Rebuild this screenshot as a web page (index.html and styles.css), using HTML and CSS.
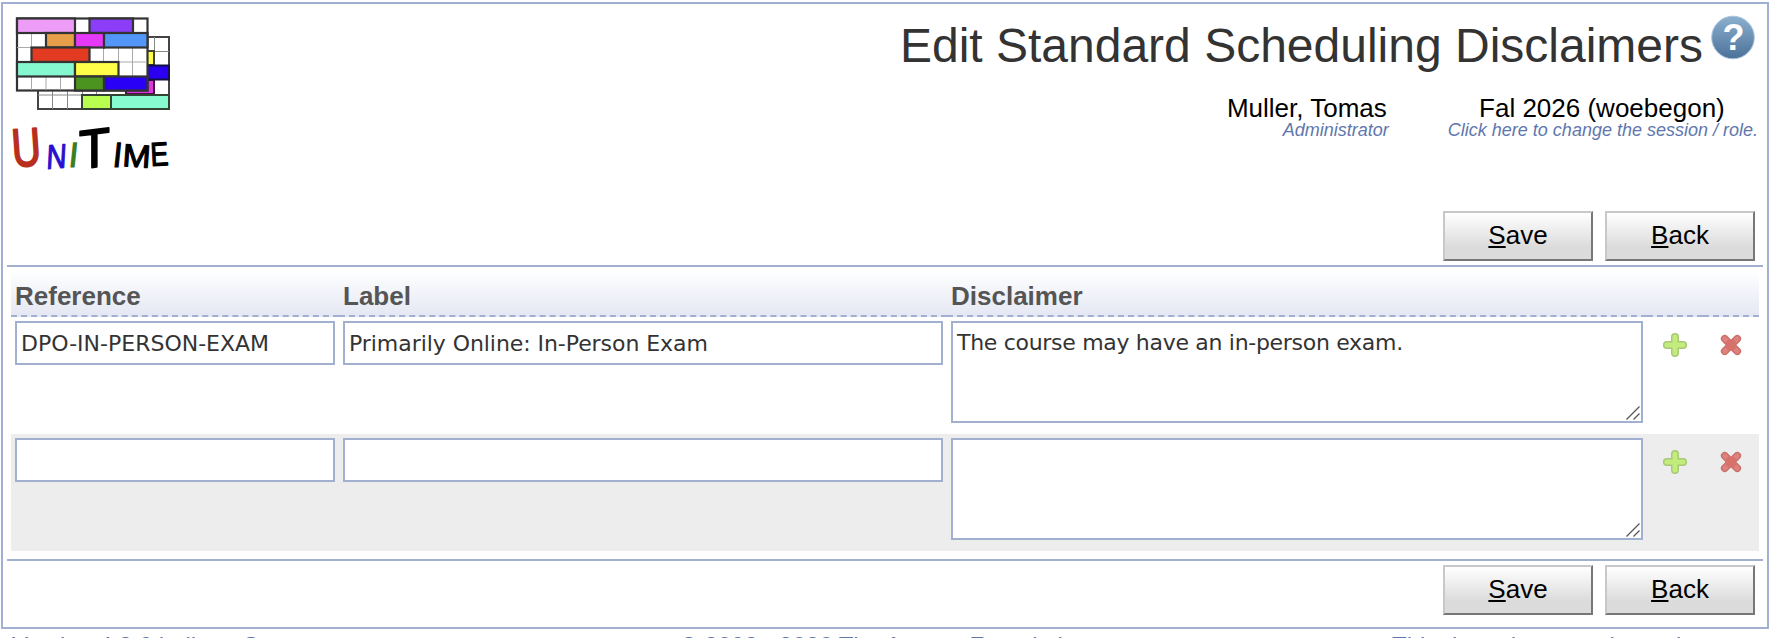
FILE: index.html
```
<!DOCTYPE html>
<html lang="en">
<head>
  <meta charset="UTF-8">
  <title>Edit Standard Scheduling Disclaimers</title>
  <link rel="stylesheet" href="styles.css">
</head>
<body>
  <svg class="defs" width="0" height="0">
    <defs>
      <linearGradient id="blue" x1="0" y1="0" x2="0" y2="1">
        <stop offset="0" stop-color="#8bb0cf"/>
        <stop offset="1" stop-color="#4c7199"/>
      </linearGradient>
      <symbol id="add" viewBox="0 0 26 26">
        <path d="M13 4.900V21.100M4.900 13H21.100" stroke="#a9c878" stroke-width="8" stroke-linecap="round"/>
        <path d="M13 4.900V21.100M4.900 13H21.100" stroke="#c2ec7c" stroke-width="5" stroke-linecap="round"/>
      </symbol>
      <symbol id="delete" viewBox="0 0 26 26">
        <path d="M6.700 6.700L19.300 19.300M19.300 6.700L6.700 19.300" stroke="#c8706b" stroke-width="7.600" stroke-linecap="round"/>
        <path d="M6.700 6.700L19.300 19.300M19.300 6.700L6.700 19.300" stroke="#df827d" stroke-width="4.800" stroke-linecap="round"/>
        <path d="M9 9L17 17M17 9L9 17" stroke="#d8716b" stroke-width="4.800"/>
      </symbol>
    </defs>
  </svg>

  <div class="page">
    <div class="header">
      <svg class="logo" width="160" height="162" viewBox="12 14 160 162">
        <!-- back timetable -->
        <rect x="38" y="37" width="131" height="72" fill="#fff" stroke="#444" stroke-width="2"/>
        <path d="M52.500 91V109M67.500 91V109M82.500 91V109M96.500 91V109M154.500 37V95M38 95H169M148 51.500H169" stroke="#888" fill="none"/>
        <rect x="140" y="51" width="14" height="14" fill="#ffff45" stroke="#443" stroke-width="2"/>
        <rect x="126" y="80" width="28" height="14" fill="#dd35df" stroke="#414" stroke-width="2"/>
        <rect x="140" y="65.500" width="29" height="14" fill="#2b00f0" stroke="#114" stroke-width="2"/>
        <rect x="82" y="95" width="29" height="14" fill="#b8ff50" stroke="#343" stroke-width="2"/>
        <rect x="111" y="95" width="58" height="14" fill="#87fad0" stroke="#343" stroke-width="2"/>
        <!-- front timetable -->
        <rect x="17" y="18.500" width="130.500" height="72" fill="#fff" stroke="#333" stroke-width="2.200"/>
        <path d="M31.500 33V90M46 33V90M60.500 76V90M103.500 48V62M118.500 48V76M132.500 48V76M17 47.500H46M90 62H147" stroke="#aaa" fill="none"/>
        <g stroke="#333" stroke-width="2.200">
          <rect x="17" y="18.500" width="58" height="14.500" fill="#ed9cf7"/>
          <rect x="89.500" y="18.500" width="43.500" height="14.500" fill="#8b3df7"/>
          <rect x="46" y="33" width="29" height="14.500" fill="#e89f49"/>
          <rect x="75" y="33" width="29" height="14.500" fill="#e638f7"/>
          <rect x="104" y="33" width="43.500" height="14.500" fill="#5297f8"/>
          <rect x="31.500" y="47.500" width="58" height="14.500" fill="#e23b22"/>
          <rect x="17" y="62" width="58" height="14.500" fill="#85f8cf"/>
          <rect x="75" y="62" width="43.500" height="14.500" fill="#ffff49"/>
          <rect x="75" y="76.500" width="29" height="14" fill="#4b941f"/>
          <rect x="104" y="76.500" width="43.500" height="14" fill="#2900f5"/>
          <path d="M17 33H147.500" fill="none"/>
        </g>
        <g class="wordmark">
          <text transform="translate(13 167) rotate(-4)" font-size="54" textLength="29" lengthAdjust="spacingAndGlyphs" fill="#b92f1d" stroke="#b92f1d" stroke-width="2">U</text>
          <text transform="translate(46 169) rotate(-4) skewX(-7)" font-size="34" textLength="20" lengthAdjust="spacingAndGlyphs" fill="#2b0fd0" stroke="#2b0fd0">N</text>
          <text transform="translate(68 167) skewX(-6)" font-size="35" textLength="9" lengthAdjust="spacingAndGlyphs" fill="#3b7d20" stroke="#3b7d20">I</text>
          <text transform="translate(79 169) rotate(-7) skewX(-7)" font-size="54" textLength="31" lengthAdjust="spacingAndGlyphs" stroke="#000" stroke-width="2">T</text>
          <text transform="translate(112 167) skewX(-6)" font-size="35" textLength="9" lengthAdjust="spacingAndGlyphs" stroke="#000">I</text>
          <text transform="translate(122 166) rotate(4)" font-size="32" textLength="28" lengthAdjust="spacingAndGlyphs" stroke="#000">M</text>
          <text transform="translate(151 166) rotate(-3)" font-size="33" textLength="18" lengthAdjust="spacingAndGlyphs" stroke="#000">E</text>
        </g>
      </svg>
      <div class="header-right">
        <div class="title">
          <h1>Edit Standard Scheduling Disclaimers</h1>
          <svg class="help" width="46" height="46" viewBox="0 0 46 46">
            <circle cx="23" cy="23.500" r="21.300" fill="url(#blue)" stroke="#a9c4dc" stroke-width="1"/>
            <text x="23.500" y="35.500" text-anchor="middle">?</text>
          </svg>
        </div>
        <div class="info">
          <div class="user">
            <div class="name">Muller, Tomas</div>
            <a class="hint">Administrator</a>
          </div>
          <div class="session">
            <div class="name">Fal 2026 (woebegon)</div>
            <a class="hint">Click here to change the session / role.</a>
          </div>
        </div>
      </div>
    </div>

    <div class="buttons top">
      <button class="btn"><u>S</u>ave</button>
      <button class="btn"><u>B</u>ack</button>
    </div>

    <div class="table">
      <div class="row head">
        <div class="cell">Reference</div>
        <div class="cell">Label</div>
        <div class="cell">Disclaimer</div>
        <div class="cell"></div>
        <div class="cell"></div>
      </div>
      <div class="row">
        <div class="cell"><input class="field" type="text" value="DPO-IN-PERSON-EXAM"></div>
        <div class="cell"><input class="field label" type="text" value="Primarily Online: In-Person Exam"></div>
        <div class="cell area">
          <textarea class="field">The course may have an in-person exam.</textarea>
          <svg class="grip" width="16" height="16" viewBox="0 0 16 16"><path d="M1.500 14.500L14.500 1.500M8.500 14.500L14.500 8.500"/></svg>
        </div>
        <div class="cell icon"><svg width="26" height="26"><use href="#add"/></svg></div>
        <div class="cell icon"><svg width="26" height="26"><use href="#delete"/></svg></div>
      </div>
      <div class="row odd">
        <div class="cell"><input class="field" type="text"></div>
        <div class="cell"><input class="field label" type="text"></div>
        <div class="cell area">
          <textarea class="field"></textarea>
          <svg class="grip" width="16" height="16" viewBox="0 0 16 16"><path d="M1.500 14.500L14.500 1.500M8.500 14.500L14.500 8.500"/></svg>
        </div>
        <div class="cell icon"><svg width="26" height="26"><use href="#add"/></svg></div>
        <div class="cell icon"><svg width="26" height="26"><use href="#delete"/></svg></div>
      </div>
    </div>

    <div class="buttons bottom">
      <button class="btn"><u>S</u>ave</button>
      <button class="btn"><u>B</u>ack</button>
    </div>
  </div>

  <div class="footer">
    <span>Version 4.8.6 built on Sat</span>
    <span>© 2008 - 2026 The Apereo Foundation</span>
    <span>This demo is not registered.</span>
  </div>
</body>
</html>
```
FILE: styles.css
```
* {
  box-sizing: border-box;
}
html, body {
  height: 100%;
  overflow: hidden;
}
body {
  margin: 0;
  padding: 2px 9px 0 1px;
  background: #fff;
  color: #000;
  font-family: "Liberation Sans", Arial, sans-serif;
  font-size: 26px;
}
.defs {
  display: block;
}
.page {
  height: 627px;
  border: 2px solid #a1afd0;
  padding: 0 4px;
}
.header {
  display: flex;
  height: 207px;
  padding: 10px 5px 0 5px;
}
.logo {
  flex: none;
  overflow: visible;
}
.wordmark {
  font-family: "Liberation Sans", Arial, sans-serif;
  stroke-width: 1.2;
  stroke-linejoin: round;
}
.header-right {
  flex: 1;
  display: flex;
  flex-direction: column;
  align-items: flex-end;
}
.title {
  display: flex;
  height: 80px;
  margin-right: 2px;
}
h1 {
  margin: 4px 7px 0 0;
  font-size: 48px;
  font-weight: normal;
  line-height: 56px;
  color: #333;
  white-space: nowrap;
}
.help text {
  font: bold 36px "Liberation Sans", Arial, sans-serif;
  fill: #fff;
}
.info {
  display: flex;
  gap: 59px;
  white-space: nowrap;
}
.user {
  text-align: right;
}
.session {
  text-align: center;
}
.name {
  margin-right: 2px;
  line-height: 28px;
  font-size: 26px;
}
.hint {
  display: block;
  margin-top: -1px;
  font-size: 18px;
  font-style: italic;
  line-height: 18px;
  color: #6077ad;
}
.buttons {
  display: flex;
  justify-content: flex-end;
  gap: 12px;
  padding-right: 8px;
}
.top {
  height: 56px;
  border-bottom: 2px solid #a1afd0;
}
.bottom {
  margin-top: 8px;
  padding-top: 4px;
  border-top: 2px solid #a1afd0;
}
.btn {
  width: 150px;
  height: 50px;
  padding: 0 0 1px;
  border: 2px solid;
  border-color: #c8c8c8 #777 #777 #c8c8c8;
  background: linear-gradient(#fff, #dbdbdb 75%, #dcdcdc);
  font: 26px "Liberation Sans", Arial, sans-serif;
  color: #000;
}
.btn u {
  text-decoration-thickness: 2px;
  text-underline-offset: 2px;
}
.table {
  margin: 4px 4px 0;
}
.row {
  display: grid;
  grid-template-columns: 328px 608px 700px 56px 56px;
  height: 117px;
}
.odd {
  background: #ededed;
}
.cell {
  padding: 4px;
}
.head {
  height: 46px;
  background: linear-gradient(#fff, #e4e7f3);
  font-weight: bold;
  color: #555;
}
.head .cell {
  padding: 10px 4px 0;
  line-height: 30px;
  border-bottom: 2px dashed #a1afd0;
}
.field {
  display: block;
  width: 100%;
  height: 44px;
  margin: 0;
  padding: 0 4px;
  border: 2px solid #a1afd0;
  border-radius: 0;
  outline: none;
  background: #fff;
  color: #333;
  font: 22px "DejaVu Sans", Verdana, sans-serif;
}
.label {
  letter-spacing: -0.06px;
}
.area {
  position: relative;
}
textarea.field {
  height: 102px;
  padding: 6px 4px;
  line-height: 27px;
  letter-spacing: -0.3px;
  resize: none;
}
.grip {
  position: absolute;
  right: 6px;
  bottom: 13px;
  fill: none;
  stroke: #555;
  stroke-width: 1.3;
}
.icon {
  padding: 15px 0 0 15px;
}
.icon svg {
  display: block;
}
.footer {
  display: grid;
  grid-template-columns: 668px 712px 1fr;
  padding: 3px 0 0 11px;
  font-size: 24px;
  line-height: 28px;
  color: #6077ad;
  white-space: nowrap;
}
```
